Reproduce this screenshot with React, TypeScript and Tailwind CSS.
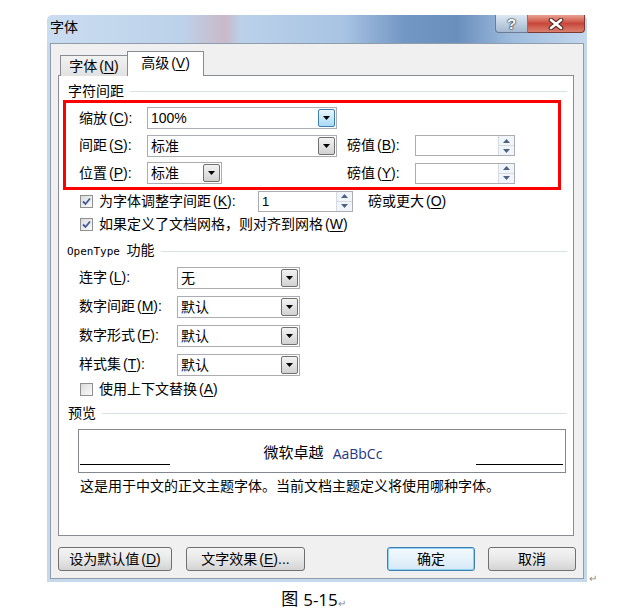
import React from 'react'

const Mn = ({ k }: { k: string }) => (
  <span className="ml-[2px]">
    (<span className="underline underline-offset-2">{k}</span>)
  </span>
)

const Tri = () => (
  <svg width="7" height="4" viewBox="0 0 7 4">
    <path d="M0 0h7L3.5 4z" fill="#000" />
  </svg>
)

function Combo({ value, w, hot }: { value: string; w: string; hot?: boolean }) {
  return (
    <div className={`flex h-[22px] ${w} border border-[#abadb3] bg-white`}>
      <span className="flex-1 pl-[3px] text-[14px] leading-[20px]">{value}</span>
      <span
        className={`my-px mr-px flex w-[17px] items-center justify-center rounded-[2px] border ${
          hot
            ? 'border-[#3c7fb1] bg-gradient-to-b from-[#eaf6fd] to-[#a9daf6]'
            : 'border-[#707070] bg-gradient-to-b from-[#f3f3f3] to-[#d2d2d2]'
        }`}
      >
        <Tri />
      </span>
    </div>
  )
}

function Spin({ value, w }: { value?: string; w: string }) {
  return (
    <div className={`flex h-[21px] ${w} border border-[#abadb3] bg-white`}>
      <span className="flex-1 pl-[3px] text-[13px] leading-[19px]">{value}</span>
      <span className="flex w-[16px] flex-col border-l border-[#d5dbe3] bg-[#f1f4f9]">
        <span className="flex flex-1 items-center justify-center border-b border-[#d5dbe3]">
          <svg width="7" height="4" viewBox="0 0 7 4">
            <path d="M0 4h7L3.5 0z" fill="#4d6185" />
          </svg>
        </span>
        <span className="flex flex-1 items-center justify-center">
          <svg width="7" height="4" viewBox="0 0 7 4">
            <path d="M0 0h7L3.5 4z" fill="#4d6185" />
          </svg>
        </span>
      </span>
    </div>
  )
}

function Check({ on }: { on?: boolean }) {
  return (
    <span className="flex h-[13px] w-[13px] shrink-0 items-center justify-center border border-[#8e8f8f] bg-gradient-to-br from-[#dcdcdc] to-[#fbfbfb]">
      {on && (
        <svg width="9" height="9" viewBox="0 0 9 9">
          <path d="M1 4.5l2.5 2.5L8 1.5" stroke="#3c5a9a" strokeWidth="1.8" fill="none" />
        </svg>
      )}
    </span>
  )
}

function Header({ children, pl }: { children: React.ReactNode; pl: string }) {
  return (
    <div className={`flex h-[16px] items-center ${pl} pr-[6px]`}>
      <span className="leading-[16px]">{children}</span>
      <span className="ml-[6px] h-px flex-1 bg-[#d8e0e8]" />
    </div>
  )
}

function Btn({ children, w, def }: { children: React.ReactNode; w: string; def?: boolean }) {
  return (
    <div
      className={`flex h-[24px] ${w} items-center justify-center rounded-[3px] border ${
        def
          ? 'border-[#3c7fb1] bg-gradient-to-b from-[#f4fafd] to-[#d6e9f6] shadow-[inset_0_0_0_1px_#8fd0f3]'
          : 'border-[#707070] bg-gradient-to-b from-[#f4f4f4] via-[#e8e8e8] to-[#d3d3d3]'
      } text-[14px] leading-[22px]`}
    >
      {children}
    </div>
  )
}

const combos = [
  { label: '连字', k: 'L', value: '无' },
  { label: '数字间距', k: 'M', value: '默认' },
  { label: '数字形式', k: 'F', value: '默认' },
  { label: '样式集', k: 'T', value: '默认' },
]

export default function App() {
  return (
    <div className="h-[615px] w-[627px] bg-white font-['Liberation_Sans','Noto_Sans_CJK_SC',sans-serif] text-[14px] text-black">
      <div className="flex items-end pl-[47px] pt-[15px]">
        <div className="w-[540px]">
          {/* title bar */}
          <div className="flex h-[28px] justify-between rounded-t-[5px] bg-[linear-gradient(90deg,#cadcf0_0%,#bcd2ea_25%,#c9b9c8_33%,#bbd1ea_36%,#a8c3e3_55%,#7397c4_66%,#6a8fbd_76%,#9dbbdd_86%,#c4d8ee_100%)]">
            <span className="pl-[3px] pt-[4px] leading-[16px]">字体</span>
            <div className="mr-[2px] flex items-start">
              <div className="flex h-[18px] w-[33px] items-center justify-center rounded-bl-[4px] border border-t-0 border-[#6b7c92] bg-gradient-to-b from-[#dfe8f3] to-[#a3b8cf] text-[15px] font-bold leading-[16px] text-white [text-shadow:0_0_2px_#000,0_0_1px_#000]">
                ?
              </div>
              <div className="flex h-[18px] w-[57px] items-center justify-center rounded-br-[4px] border border-l-0 border-t-0 border-[#7a3a33] bg-gradient-to-b from-[#e7a293] via-[#c8473a] to-[#d8806f]">
                <svg width="16" height="12" viewBox="0 0 16 12">
                  <path d="M3 2l10 8M13 2l-10 8" stroke="#4a1e18" strokeWidth="4.6" strokeLinecap="round" />
                  <path d="M3 2l10 8M13 2l-10 8" stroke="#fff" strokeWidth="2.8" strokeLinecap="round" />
                </svg>
              </div>
            </div>
          </div>

          {/* frame + body */}
          <div className="bg-[#c5d8ec] px-[3px] pb-[3px]">
            <div className="border border-[#8f9cab] bg-[#f0f0f0] pb-[7px] pl-[7px] pr-[9px] pt-[7px]">
              {/* tabs */}
              <div className="relative z-10 -mb-px flex h-[25px] items-end pl-[2px]">
                <div className="flex h-[21px] w-[68px] items-center justify-center border border-b-0 border-[#898c95] bg-gradient-to-b from-[#f2f2f2] to-[#e1e1e1] leading-[18px]">
                  字体<Mn k="N" />
                </div>
                <div className="-ml-px flex h-[25px] w-[77px] items-center justify-center border border-b-0 border-[#898c95] bg-white pb-[2px] leading-[18px]">
                  高级<Mn k="V" />
                </div>
              </div>

              {/* panel */}
              <div className="h-[461px] border border-[#898c95] bg-white pt-[7px]">
                <Header pl="pl-[9px]">字符间距</Header>

                <div className="ml-[4px] mt-px h-[90px] w-[498px] border-[3px] border-[#ff0000] pt-px">
                  <div className="flex h-[28px] items-center pl-[13px]">
                    <span className="w-[68px]">缩放<Mn k="C" />:</span>
                    <Combo value="100%" w="w-[190px]" hot />
                  </div>
                  <div className="flex h-[27px] items-center pl-[13px]">
                    <span className="w-[68px]">间距<Mn k="S" />:</span>
                    <Combo value="标准" w="w-[190px]" />
                    <span className="ml-[10px] w-[68px]">磅值<Mn k="B" />:</span>
                    <Spin w="w-[100px]" />
                  </div>
                  <div className="flex h-[28px] items-center pl-[13px]">
                    <span className="w-[68px]">位置<Mn k="P" />:</span>
                    <Combo value="标准" w="w-[75px]" />
                    <span className="ml-[125px] w-[68px]">磅值<Mn k="Y" />:</span>
                    <Spin w="w-[100px]" />
                  </div>
                </div>

                <div className="flex h-[22px] items-center pl-[21px]">
                  <Check on />
                  <span className="ml-[6px] w-[159px]">为字体调整字间距<Mn k="K" />:</span>
                  <Spin value="1" w="w-[95px]" />
                  <span className="ml-[15px]">磅或更大<Mn k="O" /></span>
                </div>
                <div className="flex h-[24px] items-center pl-[21px]">
                  <Check on />
                  <span className="ml-[6px]">如果定义了文档网格，则对齐到网格<Mn k="W" /></span>
                </div>

                <div className="mt-[7px]">
                  <Header pl="pl-[8px]">
                    <span className="font-['DejaVu_Sans_Mono',monospace] text-[11px]">OpenType </span>功能
                  </Header>
                </div>

                <div className="mt-[4px]">
                  {combos.map((c) => (
                    <div key={c.k} className="flex h-[29px] items-center pl-[20px]">
                      <span className="w-[98px]">
                        {c.label}
                        <Mn k={c.k} />:
                      </span>
                      <Combo value={c.value} w="w-[123px]" />
                    </div>
                  ))}
                </div>

                <div className="flex h-[20px] items-center pl-[21px]">
                  <Check />
                  <span className="ml-[6px]">使用上下文替换<Mn k="A" /></span>
                </div>

                <div className="mt-[6px]">
                  <Header pl="pl-[9px]">预览</Header>
                </div>

                <div className="ml-[19px] mt-[8px] flex h-[44px] w-[488px] items-center border border-[#828790]">
                  <span className="ml-px mt-[26px] h-px w-[90px] bg-black" />
                  <div className="flex flex-1 items-center justify-center pt-[4px]">
                    <span className="text-[15px]">微软卓越</span>
                    <span className="ml-[9px] font-['Open_Sans',sans-serif] text-[14px] text-[#1d3585]">AaBbCc</span>
                  </div>
                  <span className="mr-[2px] mt-[26px] h-px w-[87px] bg-black" />
                </div>

                <div className="mt-[3px] h-[20px] pl-[21px] leading-[20px]">
                  这是用于中文的正文主题字体。当前文档主题定义将使用哪种字体。
                </div>
              </div>

              {/* buttons */}
              <div className="mt-[11px] flex justify-between">
                <div className="flex gap-[14px]">
                  <Btn w="w-[114px]">设为默认值<Mn k="D" /></Btn>
                  <Btn w="w-[119px]">文字效果<Mn k="E" />...</Btn>
                </div>
                <div className="-mr-[2px] flex gap-[13px]">
                  <Btn w="w-[88px]" def>确定</Btn>
                  <Btn w="w-[88px]">取消</Btn>
                </div>
              </div>
            </div>
          </div>
        </div>
        <span className="mb-[-3px] ml-[2px] text-[10px] leading-[12px] text-[#8a8a8a]">↵</span>
      </div>

      <div className="mt-[7px] flex items-end justify-center">
        <span className="text-[17px] leading-[22px]">图</span>
        <span className="ml-[5px] font-['Open_Sans',sans-serif] text-[17px] leading-[22px]">5-15</span>
        <span className="text-[10px] leading-[14px] text-[#8a8a8a]">↵</span>
      </div>
    </div>
  )
}
